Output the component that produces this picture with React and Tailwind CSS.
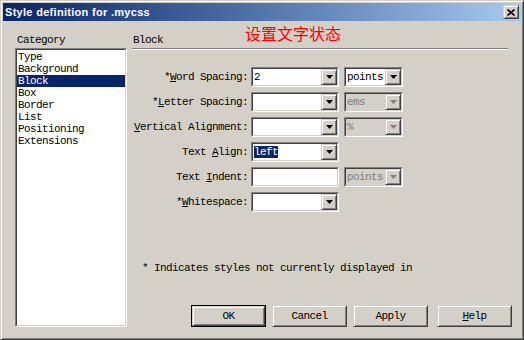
const mono = "font-['Liberation_Mono',monospace] text-[11px] tracking-[-0.6px] leading-[12px]";

const raised =
  "border border-t-[#d4d0c8] border-l-[#d4d0c8] border-r-[#404040] border-b-[#404040] shadow-[inset_1px_1px_#fff,inset_-1px_-1px_#808080]";

function Arrow({ disabled }) {
  return (
    <svg width="7" height="4" viewBox="0 0 7 4">
      <polygon points="0,0 7,0 3.5,4" fill={disabled ? "#808080" : "#000"} />
    </svg>
  );
}

function Combo({ w, value, disabled, sel, noBtn }) {
  return (
    <div className={`flex h-[20px] ${w} border border-t-[#808080] border-l-[#808080] border-r-white border-b-white`}>
      <div
        className={`flex flex-1 border border-t-[#404040] border-l-[#404040] border-r-[#d4d0c8] border-b-[#d4d0c8] ${
          disabled ? "bg-[#d4d0c8]" : "bg-white"
        }`}
      >
        <div className="flex flex-1 items-center pl-[1px]">
          {value && (
            <span
              className={`${mono} ${sel ? "bg-[#0a246a] text-white" : disabled ? "text-[#808080]" : "text-black"}`}
            >
              {value}
            </span>
          )}
        </div>
        {!noBtn && (
          <div className={`flex h-[16px] w-[16px] items-center justify-center bg-[#d4d0c8] ${raised}`}>
            <Arrow disabled={disabled} />
          </div>
        )}
      </div>
    </div>
  );
}

function Row({ label, combo, unit }) {
  return (
    <div className="flex h-[20px] items-center">
      <div className={`${mono} w-[119px] pr-[3px] text-right text-black`}>{label}</div>
      {combo}
      {unit && <div className="ml-[5px]">{unit}</div>}
    </div>
  );
}

function Button({ children, def }) {
  return (
    <div className={def ? "border border-black" : ""}>
      <div
        className={`flex ${def ? "h-[20px] w-[73px]" : "h-[22px] w-[75px]"} items-center justify-center bg-[#d4d0c8] ${raised} ${mono} text-black`}
      >
        {children}
      </div>
    </div>
  );
}

export default function App() {
  const items = ["Type", "Background", "Block", "Box", "Border", "List", "Positioning", "Extensions"];
  return (
    <div className="flex h-[340px] w-[524px] flex-col border border-t-[#d4d0c8] border-l-[#d4d0c8] border-r-[#404040] border-b-[#404040] bg-[#d4d0c8] p-[2px] shadow-[inset_1px_1px_#fff,inset_-1px_-1px_#808080]">
      {/* Title bar */}
      <div className="flex h-[18px] items-center justify-between bg-gradient-to-r from-[#0a246a] to-[#a6caf0] pl-[2px] pr-[2px]">
        <span className="font-['Liberation_Sans',sans-serif] text-[11px] font-bold tracking-[0.3px] text-white">
          Style definition for .mycss
        </span>
        <div className={`flex h-[14px] w-[16px] items-center justify-center bg-[#d4d0c8] ${raised}`}>
          <svg width="8" height="7" viewBox="0 0 8 7">
            <path d="M0.5 0.5 L7.5 6.5 M7.5 0.5 L0.5 6.5" stroke="#000" strokeWidth="1.6" />
          </svg>
        </div>
      </div>

      {/* Body */}
      <div className="relative flex flex-1 pl-[12px] pt-[13px] pb-[10px]">
        <div className="absolute left-[242px] top-[2px] font-['Noto_Sans_CJK_SC',sans-serif] text-[16px] leading-[20px] text-[#ff0000]">
          设置文字状态
        </div>

        {/* Left column */}
        <div className="flex w-[112px] flex-col">
          <div className={`${mono} pl-[2px] text-black`}>Category</div>
          <div className="mt-[2px] flex flex-1 border border-t-[#808080] border-l-[#808080] border-r-white border-b-white">
            <div className="flex flex-1 flex-col border border-t-[#404040] border-l-[#404040] border-r-[#d4d0c8] border-b-[#d4d0c8] bg-white pt-[1px]">
              {items.map((it) => (
                <div
                  key={it}
                  className={`${mono} h-[12px] pl-[1px] ${it === "Block" ? "bg-[#0a246a] text-white" : "text-black"}`}
                >
                  {it}
                </div>
              ))}
            </div>
          </div>
        </div>

        {/* Right column */}
        <div className="ml-[5px] flex flex-1 flex-col pr-[9px]">
          <div className={`${mono} pl-[1px] text-black`}>Block</div>
          <div className="mt-[2px] mr-[4px] h-[2px] border-t border-t-[#808080] border-b border-b-white" />

          <div className="mt-[17px] flex flex-col gap-[5px]">
            <Row
              label={<>*<u>W</u>ord Spacing:</>}
              combo={<Combo w="w-[88px]" value="2" />}
              unit={<Combo w="w-[59px]" value="points" />}
            />
            <Row
              label={<>*<u>L</u>etter Spacing:</>}
              combo={<Combo w="w-[88px]" />}
              unit={<Combo w="w-[59px]" value="ems" disabled />}
            />
            <Row
              label={<><u>V</u>ertical Alignment:</>}
              combo={<Combo w="w-[88px]" />}
              unit={<Combo w="w-[59px]" value="%" disabled />}
            />
            <Row label={<>Text <u>A</u>lign:</>} combo={<Combo w="w-[88px]" value="left" sel />} />
            <Row
              label={<>Text <u>I</u>ndent:</>}
              combo={<Combo w="w-[88px]" noBtn />}
              unit={<Combo w="w-[59px]" value="points" disabled />}
            />
            <Row label={<>*<u>W</u>hitespace:</>} combo={<Combo w="w-[88px]" />} />
          </div>

          <div className={`${mono} mt-[50px] pl-[10px] text-black`}>
            * Indicates styles not currently displayed in
          </div>

          <div className="mt-auto flex justify-end gap-[6px]">
            <Button def>OK</Button>
            <Button>Cancel</Button>
            <Button>Apply</Button>
            <div className="ml-[3px]">
              <Button>
                <u>H</u>elp
              </Button>
            </div>
          </div>
        </div>
      </div>
    </div>
  );
}
